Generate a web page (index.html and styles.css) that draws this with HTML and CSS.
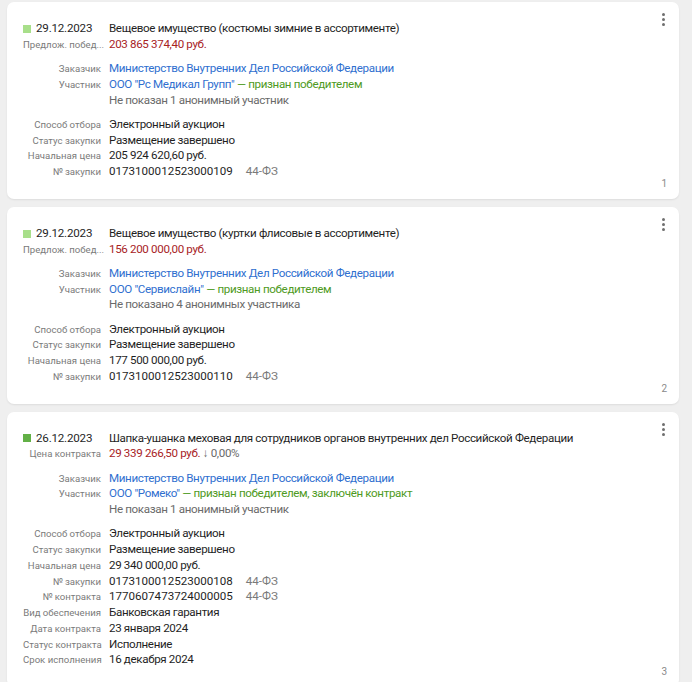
FILE: index.html
```html
<!DOCTYPE html>
<html lang="ru">

<head>
    <meta charset="UTF-8">
    <meta name="viewport" content="width=device-width, initial-scale=1.0">
    <title>Закупки</title>
    <link rel="stylesheet" href="styles.css">
</head>

<body>
    <div class="list">
        <!-- карточка 1 -->
        <div class="card">
            <div class="menu"><span></span><span></span><span></span></div>
            <div class="head">
                <div class="lbl date"><i class="sq light"></i>29.12.2023</div>
                <div class="val">Вещевое имущество (костюмы зимние в ассортименте)</div>
                <div class="lbl">Предлож. побед...</div>
                <div class="val price">203 865 374,40 руб.</div>
            </div>
            <div class="grid">
                <div class="lbl">Заказчик</div>
                <div class="val link">Министерство Внутренних Дел Российской Федерации</div>
                <div class="lbl">Участник</div>
                <div class="val"><span class="link">ООО "Рс Медикал Групп"</span> <span class="win">— признан победителем</span></div>
                <div class="lbl"></div>
                <div class="val muted">Не показан 1 анонимный участник</div>
            </div>
            <div class="grid">
                <div class="lbl">Способ отбора</div>
                <div class="val">Электронный аукцион</div>
                <div class="lbl">Статус закупки</div>
                <div class="val">Размещение завершено</div>
                <div class="lbl">Начальная цена</div>
                <div class="val">205 924 620,60 руб.</div>
                <div class="lbl">№ закупки</div>
                <div class="val"><span class="code">0173100012523000109</span><span class="law">44-ФЗ</span></div>
            </div>
            <div class="num">1</div>
        </div>

        <!-- карточка 2 -->
        <div class="card">
            <div class="menu"><span></span><span></span><span></span></div>
            <div class="head">
                <div class="lbl date"><i class="sq light"></i>29.12.2023</div>
                <div class="val">Вещевое имущество (куртки флисовые в ассортименте)</div>
                <div class="lbl">Предлож. побед...</div>
                <div class="val price">156 200 000,00 руб.</div>
            </div>
            <div class="grid">
                <div class="lbl">Заказчик</div>
                <div class="val link">Министерство Внутренних Дел Российской Федерации</div>
                <div class="lbl">Участник</div>
                <div class="val"><span class="link">ООО "Сервислайн"</span> <span class="win">— признан победителем</span></div>
                <div class="lbl"></div>
                <div class="val muted">Не показано 4 анонимных участника</div>
            </div>
            <div class="grid">
                <div class="lbl">Способ отбора</div>
                <div class="val">Электронный аукцион</div>
                <div class="lbl">Статус закупки</div>
                <div class="val">Размещение завершено</div>
                <div class="lbl">Начальная цена</div>
                <div class="val">177 500 000,00 руб.</div>
                <div class="lbl">№ закупки</div>
                <div class="val"><span class="code">0173100012523000110</span><span class="law">44-ФЗ</span></div>
            </div>
            <div class="num">2</div>
        </div>

        <!-- карточка 3 -->
        <div class="card">
            <div class="menu"><span></span><span></span><span></span></div>
            <div class="head">
                <div class="lbl date"><i class="sq dark"></i>26.12.2023</div>
                <div class="val">Шапка-ушанка меховая для сотрудников органов внутренних дел Российской Федерации</div>
                <div class="lbl">Цена контракта</div>
                <div class="val"><span class="price">29 339 266,50 руб.</span> <span class="muted">↓ 0,00%</span></div>
            </div>
            <div class="grid">
                <div class="lbl">Заказчик</div>
                <div class="val link">Министерство Внутренних Дел Российской Федерации</div>
                <div class="lbl">Участник</div>
                <div class="val"><span class="link">ООО "Ромеко"</span> <span class="win">— признан победителем, заключён контракт</span></div>
                <div class="lbl"></div>
                <div class="val muted">Не показан 1 анонимный участник</div>
            </div>
            <div class="grid">
                <div class="lbl">Способ отбора</div>
                <div class="val">Электронный аукцион</div>
                <div class="lbl">Статус закупки</div>
                <div class="val">Размещение завершено</div>
                <div class="lbl">Начальная цена</div>
                <div class="val">29 340 000,00 руб.</div>
                <div class="lbl">№ закупки</div>
                <div class="val"><span class="code">0173100012523000108</span><span class="law">44-ФЗ</span></div>
                <div class="lbl">№ контракта</div>
                <div class="val"><span class="code">1770607473724000005</span><span class="law">44-ФЗ</span></div>
                <div class="lbl">Вид обеспечения</div>
                <div class="val">Банковская гарантия</div>
                <div class="lbl">Дата контракта</div>
                <div class="val">23 января 2024</div>
                <div class="lbl">Статус контракта</div>
                <div class="val">Исполнение</div>
                <div class="lbl">Срок исполнения</div>
                <div class="val">16 декабря 2024</div>
            </div>
            <div class="num">3</div>
        </div>
    </div>
</body>

</html>
```

FILE: styles.css
```css
body {
    font-family: Roboto, "Noto Sans", sans-serif;
    background-color: #efefef;
    margin: 0;
    color: #1f1f1f;
}

.list {
    display: flex;
    flex-direction: column;
    gap: 8px;
    padding: 2px 13px 0 7px;
}

.card {
    position: relative;
    background: white;
    border-radius: 7px;
    box-shadow: 0 1px 2px rgba(0, 0, 0, 0.08);
    padding: 19px 16px 9px 16px;
}

.menu {
    position: absolute;
    top: 11px;
    right: 14px;
    display: flex;
    flex-direction: column;
    gap: 2px;
}

.menu span {
    width: 3px;
    height: 3px;
    border-radius: 50%;
    background: #6f6f6f;
}

.head,
.grid {
    display: grid;
    grid-template-columns: 78px 1fr;
    column-gap: 8px;
    font-size: 11.6px;
    letter-spacing: -0.35px;
    line-height: 15.75px;
}

.grid {
    margin-top: 8.5px;
}

.lbl {
    font-size: 9.6px;
    letter-spacing: 0;
    color: #7a7a7a;
    text-align: right;
    white-space: nowrap;
}

.lbl.date {
    font-size: 11.6px;
    letter-spacing: -0.2px;
    color: #1f1f1f;
    text-align: left;
    display: flex;
    align-items: center;
    gap: 5px;
}

.sq {
    display: inline-block;
    width: 8px;
    height: 8px;
}

.sq.light {
    background: #a8df8a;
}

.sq.dark {
    background: #62b046;
}

.val {
    white-space: nowrap;
}

.code {
    letter-spacing: 0;
}

.price {
    color: #a8231f;
}

.link {
    color: #2f6fcf;
}

.win {
    color: #4e9a22;
}

.muted {
    color: #6a6a6a;
}

.law {
    color: #7a7a7a;
    margin-left: 13px;
    letter-spacing: 0;
}

.num {
    text-align: right;
    font-size: 10px;
    color: #8a8a8a;
    line-height: 12px;
    margin-top: -2px;
    margin-right: -4px;
}
```
